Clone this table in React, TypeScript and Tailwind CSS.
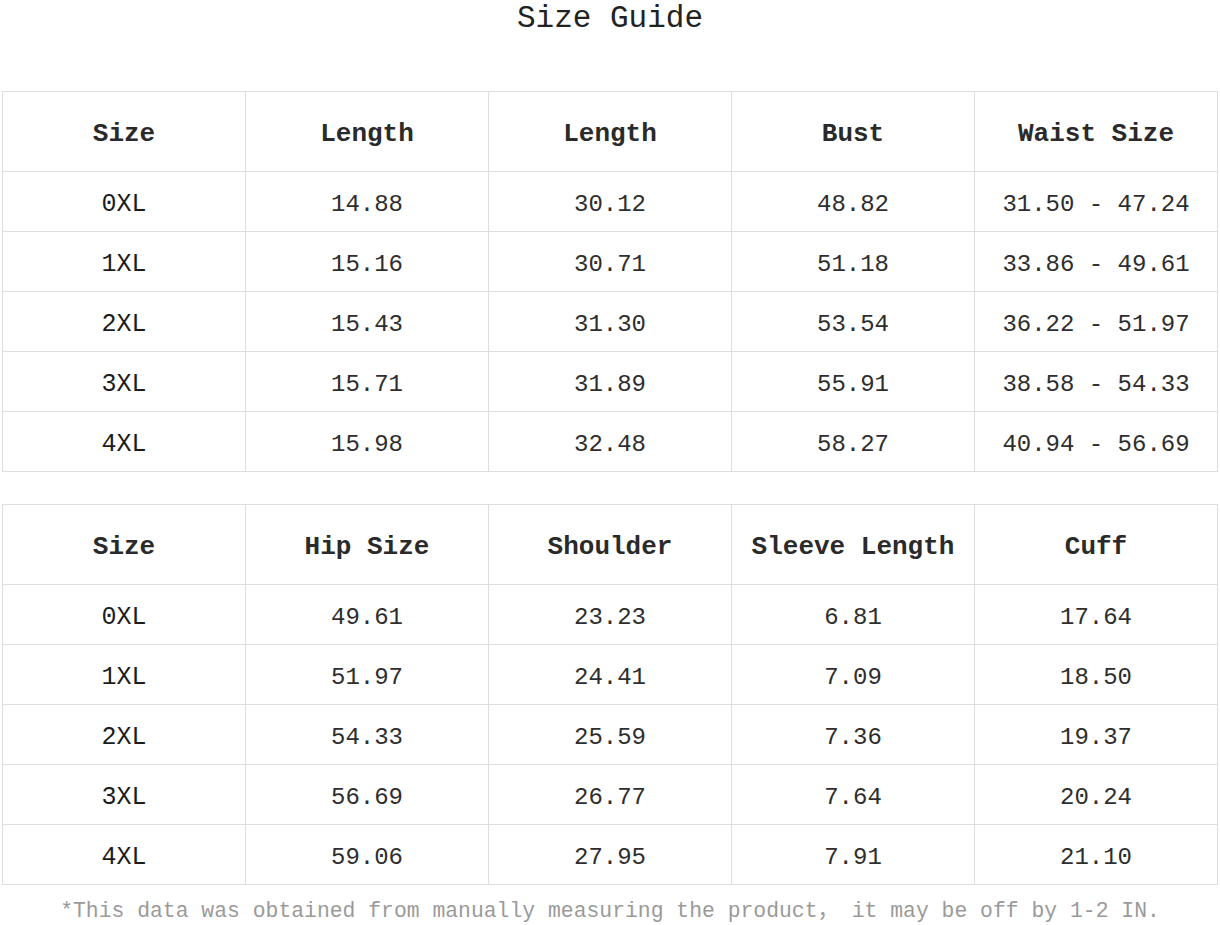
const mono = { fontFamily: '"Liberation Mono", "Noto Sans CJK SC", monospace' };

const top = {
  head: ["Size", "Length", "Length", "Bust", "Waist Size"],
  rows: [
    ["0XL", "14.88", "30.12", "48.82", "31.50 - 47.24"],
    ["1XL", "15.16", "30.71", "51.18", "33.86 - 49.61"],
    ["2XL", "15.43", "31.30", "53.54", "36.22 - 51.97"],
    ["3XL", "15.71", "31.89", "55.91", "38.58 - 54.33"],
    ["4XL", "15.98", "32.48", "58.27", "40.94 - 56.69"],
  ],
};

const bottom = {
  head: ["Size", "Hip Size", "Shoulder", "Sleeve Length", "Cuff"],
  rows: [
    ["0XL", "49.61", "23.23", "6.81", "17.64"],
    ["1XL", "51.97", "24.41", "7.09", "18.50"],
    ["2XL", "54.33", "25.59", "7.36", "19.37"],
    ["3XL", "56.69", "26.77", "7.64", "20.24"],
    ["4XL", "59.06", "27.95", "7.91", "21.10"],
  ],
};

function SizeTable({ data }: { data: { head: string[]; rows: string[][] } }) {
  return (
    <table className="w-full table-fixed border-collapse">
      <thead>
        <tr className="h-[80px]">
          {data.head.map((h, i) => (
            <th
              key={i}
              className="border border-[#dedede] pt-[6px] text-center text-[26px] font-bold text-[#2a2a2a] whitespace-nowrap"
            >
              {h}
            </th>
          ))}
        </tr>
      </thead>
      <tbody>
        {data.rows.map((r, ri) => (
          <tr key={ri} className="h-[60px]">
            {r.map((c, ci) => (
              <td
                key={ci}
                className={`border border-[#dedede] pt-[6px] text-center whitespace-nowrap ${
                  ci === 0 ? "text-[25px] text-[#1c1c1c]" : "text-[24px] text-[#2e2e2e]"
                }`}
              >
                {c}
              </td>
            ))}
          </tr>
        ))}
      </tbody>
    </table>
  );
}

export default function App() {
  return (
    <div className="w-[1220px] h-[925px] bg-white overflow-hidden" style={mono}>
      <h1 className="h-[36px] pt-[2px] flex items-center justify-center text-[31px] font-normal text-[#222]">
        Size Guide
      </h1>
      <div className="mt-[55px] mx-[2px]">
        <SizeTable data={top} />
      </div>
      <div className="mt-[32px] mx-[2px]">
        <SizeTable data={bottom} />
      </div>
      <p className="mt-[16px] text-center text-[21.4px] leading-none text-[#9a9a9a] whitespace-nowrap">
        *This data was obtained from manually measuring the product， it may be off by 1-2 IN.
      </p>
    </div>
  );
}
